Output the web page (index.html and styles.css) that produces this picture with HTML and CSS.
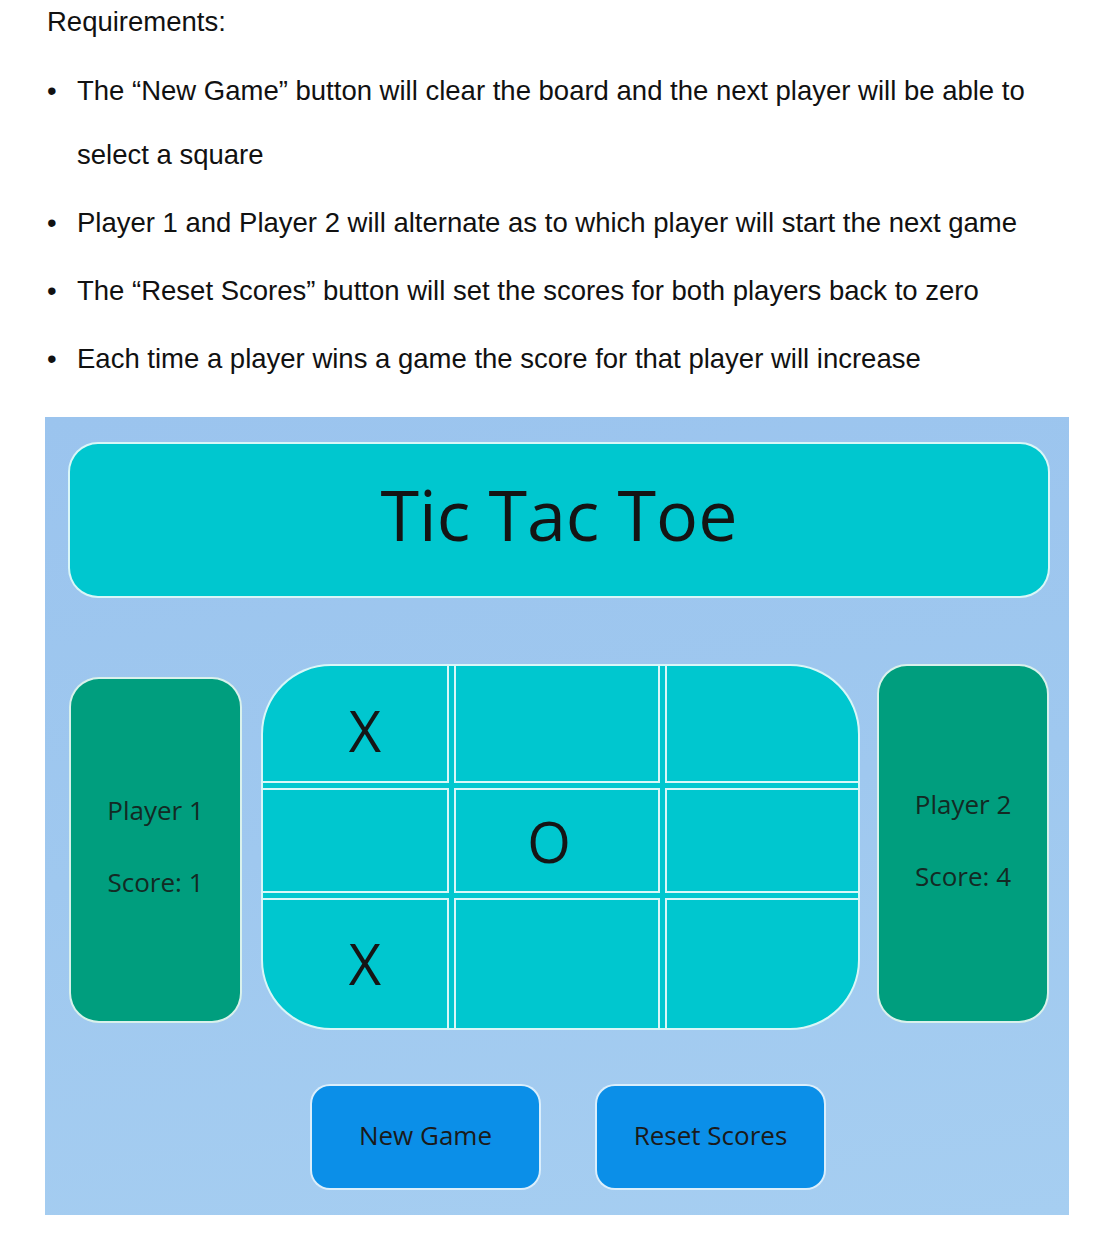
FILE: index.html
```html
<!DOCTYPE html>
<html lang="en">
<head>
<meta charset="utf-8">
<title>Tic Tac Toe Requirements</title>
<link rel="stylesheet" href="styles.css">
</head>
<body>
  <section class="doc">
    <p class="heading">Requirements:</p>
    <ul class="reqs">
      <li>The “New Game” button will clear the board and the next player will be able to select a square</li>
      <li>Player 1 and Player 2 will alternate as to which player will start the next game</li>
      <li>The “Reset Scores” button will set the scores for both players back to zero</li>
      <li>Each time a player wins a game the score for that player will increase</li>
    </ul>
  </section>

  <main class="game">
    <header class="title">Tic Tac Toe</header>

    <div class="arena">
      <div class="player player-one">
        <span>Player 1</span>
        <span>Score: 1</span>
      </div>

      <div class="board">
        <div class="cell">X</div>
        <div class="cell"></div>
        <div class="cell"></div>
        <div class="cell"></div>
        <div class="cell">O</div>
        <div class="cell"></div>
        <div class="cell">X</div>
        <div class="cell"></div>
        <div class="cell"></div>
      </div>

      <div class="player player-two">
        <span>Player 2</span>
        <span>Score: 4</span>
      </div>
    </div>

    <div class="controls">
      <button class="btn">New Game</button>
      <button class="btn">Reset Scores</button>
    </div>
  </main>
</body>
</html>
```

FILE: styles.css
```css
html, body {
  margin: 0;
  padding: 0;
  background: #ffffff;
}

body {
  width: 1110px;
  font-family: "Liberation Sans", Arial, sans-serif;
  color: #111111;
}

.doc {
  padding-left: 47px;
  padding-right: 30px;
}

.heading {
  margin: 0;
  font-size: 27.5px;
  line-height: 44px;
}

.reqs {
  list-style: none;
  margin: 15px 0 0 0;
  padding: 0;
  font-size: 27.5px;
  line-height: 64px;
}

.reqs li {
  padding-left: 30px;
  text-indent: -30px;
}

.reqs li + li {
  margin-top: 4px;
}

.reqs li::before {
  content: "•";
  display: inline-block;
  width: 30px;
  text-indent: 0;
}

.game {
  margin: 26px 0 0 45px;
  width: 1024px;
  height: 798px;
  box-sizing: border-box;
  padding: 25px 19px 25px 23px;
  background: linear-gradient(172deg, #9bc4ee 0%, #9fc8ef 50%, #a6cef1 100%);
  display: flex;
  flex-direction: column;
  font-family: "Open Sans", "Noto Sans", sans-serif;
}

.title {
  height: 156px;
  box-sizing: border-box;
  border: 2px solid rgba(255, 255, 255, 0.85);
  border-radius: 30px;
  background: #00c7cf;
  display: flex;
  align-items: center;
  justify-content: center;
  padding-bottom: 12px;
  font-size: 70px;
  color: #141414;
}

.arena {
  margin-top: 66px;
  padding-left: 1px;
  display: flex;
  align-items: flex-start;
}

.player {
  box-sizing: border-box;
  border: 2px solid rgba(255, 255, 255, 0.85);
  border-radius: 30px;
  background: #009e7e;
  display: flex;
  flex-direction: column;
  align-items: center;
  justify-content: center;
  gap: 36px;
  padding-bottom: 8px;
  font-size: 26px;
  font-weight: 500;
  line-height: 36px;
  color: #132a24;
}

.player-one {
  width: 173px;
  height: 346px;
  margin-top: 13px;
}

.player-two {
  width: 172px;
  height: 359px;
  margin-left: 17px;
}

.board {
  width: 599px;
  height: 366px;
  margin-left: 19px;
  box-sizing: border-box;
  border: 2px solid rgba(255, 255, 255, 0.85);
  border-radius: 70px;
  overflow: hidden;
  background: #00c7cf;
  display: grid;
  grid-template-columns: 186px 206px 193px;
  grid-template-rows: 117px 105px 130px;
  gap: 5px;
}

.cell {
  border: 2px solid rgba(255, 255, 255, 0.85);
  display: flex;
  align-items: center;
  justify-content: center;
  font-size: 56px;
  color: #151515;
}

.cell:nth-child(-n+3) { border-top: 0; padding-top: 12px; }
.cell:nth-child(n+7) { border-bottom: 0; padding-bottom: 2px; }
.cell:nth-child(3n+1) { border-left: 0; padding-left: 20px; }
.cell:nth-child(3n+2) { padding-right: 16px; }
.cell:nth-child(3n) { border-right: 0; }

.controls {
  margin-top: 54px;
  padding-left: 18px;
  display: flex;
  justify-content: center;
  gap: 54px;
}

.btn {
  width: 231px;
  height: 106px;
  box-sizing: border-box;
  border: 2px solid rgba(255, 255, 255, 0.85);
  border-radius: 20px;
  background: #0b8fe8;
  font-family: "Open Sans", "Noto Sans", sans-serif;
  font-size: 26px;
  font-weight: 500;
  color: #1a1a1a;
  padding: 0 0 4px 0;
}
```
